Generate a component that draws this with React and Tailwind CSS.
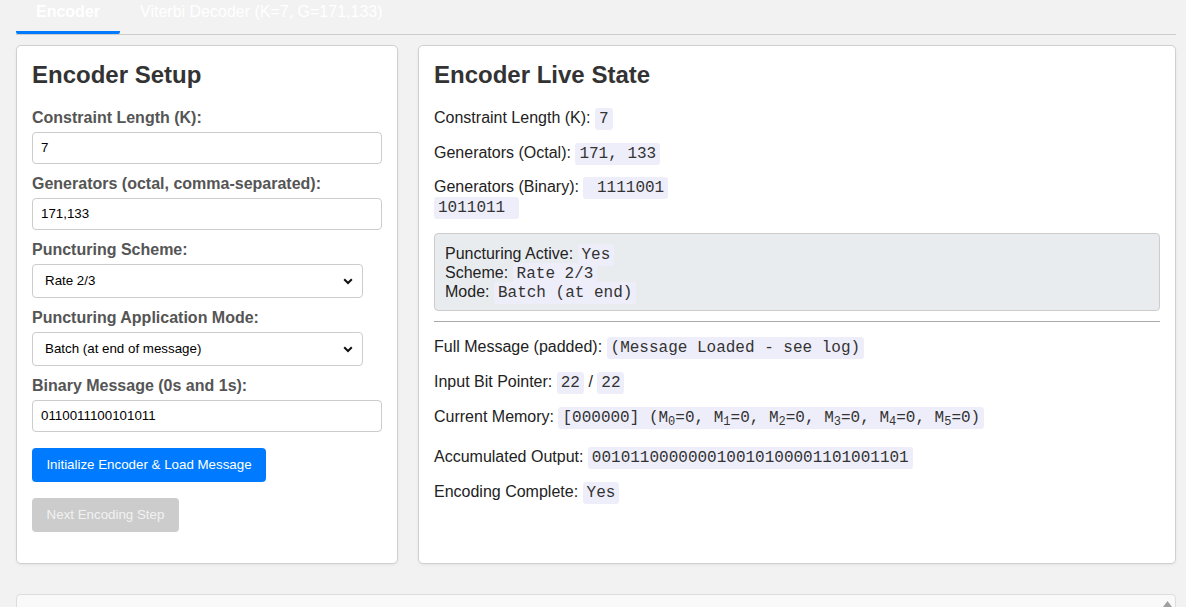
import React from "react";

const mono = { fontFamily: '"Liberation Mono", "Courier New", monospace' };

function Code({ children }) {
  return (
    <code
      style={mono}
      className="bg-[#eeeefa] text-[#333] text-[16px] leading-[16px] px-[4px] py-[2px] rounded-[3px] [box-decoration-break:clone]"
    >
      {children}
    </code>
  );
}

function Label({ children, className = "" }) {
  return (
    <div className={"text-[16px] leading-[19px] font-bold text-[#555] mb-[5px] " + className}>
      {children}
    </div>
  );
}

function TextInput({ value }) {
  return (
    <div className="h-[32px] w-full border border-[#ccc] rounded-[4px] bg-white flex items-center px-[8px] text-[13.33px] text-black">
      {value}
    </div>
  );
}

function Select({ value }) {
  return (
    <div className="h-[34px] w-[331px] border border-[#ccc] rounded-[4px] bg-white flex items-center justify-between pl-[12px] pr-[9px] text-[13.33px] text-black">
      <span>{value}</span>
      <svg width="10" height="7" viewBox="0 0 10 7">
        <path d="M1.2 1.2 L5 5 L8.8 1.2" fill="none" stroke="#111" strokeWidth="2" />
      </svg>
    </div>
  );
}

function Row({ children, className = "" }) {
  return <div className={"h-[20px] leading-[20px] whitespace-nowrap " + className}>{children}</div>;
}

export default function App() {
  return (
    <div
      className="min-h-[607px] w-[1186px] bg-[#f2f2f2] pl-[16px] pr-[10px] overflow-hidden"
      style={{ fontFamily: '"Liberation Sans", Arial, sans-serif' }}
    >
      {/* Tabs */}
      <div className="flex border-b border-[#ccc] h-[35px]">
        <div className="px-[20px] pt-[2px] pb-[10px] leading-[19px] text-[16px] font-bold text-white border-b-[3px] border-[#007bff] rounded-b-[2px]">
          Encoder
        </div>
        <div className="px-[20px] pt-[2px] pb-[10px] leading-[19px] text-[16px] text-white">
          Viterbi Decoder (K=7, G=171,133)
        </div>
      </div>

      {/* Cards */}
      <div className="flex gap-[20px] mt-[10px]">
        <div className="w-[382px] h-[519px] bg-white border border-[#d0d0d0] rounded-[5px] shadow-[0_1px_3px_rgba(0,0,0,0.06)] px-[15px] pt-[15px]">
          <h2 className="text-[24px] leading-[28px] font-bold text-[#333]">Encoder Setup</h2>
          <Label className="mt-[19px]">Constraint Length (K):</Label>
          <TextInput value="7" />
          <Label className="mt-[10px]">Generators (octal, comma-separated):</Label>
          <TextInput value="171,133" />
          <Label className="mt-[10px]">Puncturing Scheme:</Label>
          <Select value="Rate 2/3" />
          <Label className="mt-[10px]">Puncturing Application Mode:</Label>
          <Select value="Batch (at end of message)" />
          <Label className="mt-[10px]">Binary Message (0s and 1s):</Label>
          <TextInput value="0110011100101011" />
          <div className="mt-[16px] h-[34px] w-[234px] bg-[#007bff] rounded-[4px] flex items-center justify-center text-white text-[13.33px]">
            Initialize Encoder &amp; Load Message
          </div>
          <div className="mt-[16px] h-[34px] w-[147px] bg-[#cccccc] rounded-[4px] flex items-center justify-center text-[#f2f2f2] text-[13.33px]">
            Next Encoding Step
          </div>
        </div>

        <div className="flex-1 h-[519px] bg-white border border-[#d0d0d0] rounded-[5px] shadow-[0_1px_3px_rgba(0,0,0,0.06)] px-[15px] pt-[15px] text-[16px] text-[#222]">
          <h2 className="text-[24px] leading-[28px] font-bold text-[#333]">Encoder Live State</h2>
          <Row className="mt-[19px]">
            Constraint Length (K): <Code>7</Code>
          </Row>
          <Row className="mt-[15px]">
            Generators (Octal): <Code>171, 133</Code>
          </Row>
          <Row className="mt-[14px]">
            Generators (Binary): <Code>{"\u00a01111001"}</Code>
          </Row>
          <Row>
            <Code>{"1011011\u00a0"}</Code>
          </Row>
          <div className="mt-[16px] bg-[#e9ecef] border border-[#ccc] rounded-[4px] pl-[10px] pt-[10px] pb-[9px]">
            <div className="h-[19px] leading-[19px]">
              Puncturing Active: <Code>Yes</Code>
            </div>
            <div className="h-[19px] leading-[19px]">
              Scheme: <Code>Rate 2/3</Code>
            </div>
            <div className="h-[19px] leading-[19px]">
              Mode: <Code>Batch (at end)</Code>
            </div>
          </div>
          <div className="mt-[10px] border-t border-[#aaa]" />
          <Row className="mt-[15px]">
            Full Message (padded): <Code>(Message Loaded - see log)</Code>
          </Row>
          <Row className="mt-[15px]">
            Input Bit Pointer: <Code>22</Code> / <Code>22</Code>
          </Row>
          <Row className="mt-[15px]">
            Current Memory:{" "}
            <Code>
              [000000] (M<sub>0</sub>=0, M<sub>1</sub>=0, M<sub>2</sub>=0, M<sub>3</sub>=0, M<sub>4</sub>=0, M
              <sub>5</sub>=0)
            </Code>
          </Row>
          <Row className="mt-[20px]">
            Accumulated Output: <Code>001011000000010010100001101001101</Code>
          </Row>
          <Row className="mt-[15px]">
            Encoding Complete: <Code>Yes</Code>
          </Row>
        </div>
      </div>

      {/* Log panel (top edge) */}
      <div className="mt-[30px] h-[40px] bg-[#f9f9f9] border border-[#ddd] rounded-[4px] flex justify-end">
        <div className="w-[15px] flex justify-center pt-[6px]">
          <svg width="9" height="6" viewBox="0 0 9 6">
            <path d="M4.5 0 L9 6 L0 6 Z" fill="#a0a0a0" />
          </svg>
        </div>
      </div>
    </div>
  );
}
